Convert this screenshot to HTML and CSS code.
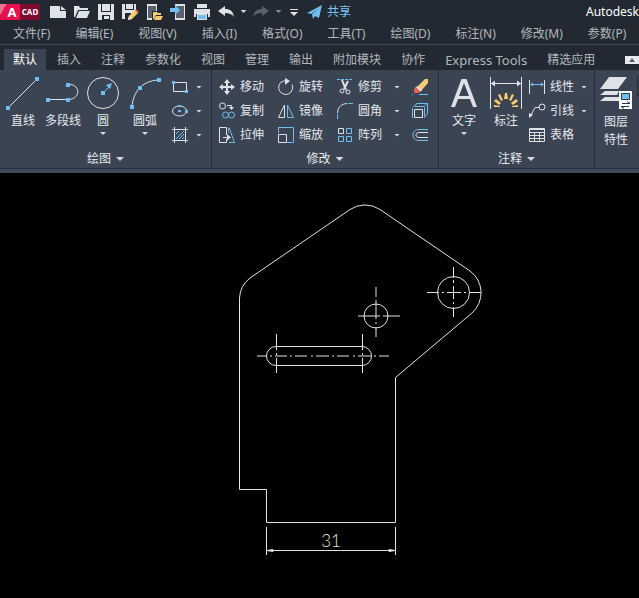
FILE: index.html
```html
<!DOCTYPE html>
<html lang="zh-CN">
<head>
  <meta charset="UTF-8">
  <title>Autodesk AutoCAD</title>
  <link rel="stylesheet" href="styles.css">
</head>
<body>
  <header class="titlebar">
    <button class="logo" aria-label="AutoCAD"><span class="logo-a">A</span><span class="logo-cad">CAD</span></button>
    <div class="quick">
      <button class="quick-btn" aria-label="新建">
        <svg width="18" height="18"><path class="fill" d="M1 3h10v5h6v7H1zM12 3l5 4h-5z"/></svg>
      </button>
      <button class="quick-btn" aria-label="打开">
        <svg width="18" height="18"><path class="fill" d="M1 3h5l1 2h8v2H5L2 14H1zM6 8h11l-3 7H3z"/></svg>
      </button>
      <button class="quick-btn" aria-label="保存">
        <svg width="18" height="18"><path class="fill" d="M1 1h16v16H1z"/><path class="dark" d="M4 1h1v7h8V1h1v8H4zM5 12h8v5H5z"/><path class="fill" d="M7 13h5v3H7z"/></svg>
      </button>
      <button class="quick-btn" aria-label="另存为">
        <svg width="18" height="18"><path class="fill" d="M1 1h14v8l-7 7H1z"/><path class="dark" d="M4 1h1v5h7V1h1v6H4zM4 10h6v2l-3 4H4z"/><path class="gold" d="M8 13l6-6 3 3-6 6-4 1z"/><path class="red" d="M14 7l1-1 3 3-1 1z"/><path class="fill" d="M8 13l3 3-4 1z"/></svg>
      </button>
      <button class="quick-btn" aria-label="从移动设备打开">
        <svg width="18" height="18"><path class="fill" d="M2 1h10v16H2z"/><path class="slate" d="M3 3h8v12H3z"/><path class="dark" d="M7 8h6l4 2v7H7z"/><path class="gold" d="M8 9h4l1 1h3v2h-5l-2 4H8zM11 13h7l-2 4H9z"/></svg>
      </button>
      <button class="quick-btn" aria-label="保存到移动设备">
        <svg width="18" height="18"><path class="fill" d="M6 1h10v16H6z"/><path class="slate" d="M7 3h8v12H7z"/><path class="sky" d="M1 5h5V2l5 5-5 5V9H1z"/></svg>
      </button>
      <button class="quick-btn" aria-label="打印">
        <svg width="18" height="18"><path class="fill" d="M4 1h10v4H4zM1 6h16v8h-2v-3H3v3H1z"/><path class="fill" d="M4 10h10v7H4z"/><path class="sky" d="M5 12h8v4H5z"/></svg>
      </button>
      <button class="quick-btn" aria-label="放弃">
        <svg width="18" height="18"><path class="fill" d="M1 8l7-5v3c5 0 8 2 9 8-2-3-5-4-9-4v3z"/></svg>
      </button>
      <button class="quick-arrow" aria-label="放弃列表"><i class="caret"></i></button>
      <button class="quick-btn" aria-label="重做">
        <svg width="18" height="18"><path class="faded" d="M17 8l-7-5v3c-5 0-8 2-9 8 2-3 5-4 9-4v3z"/></svg>
      </button>
      <button class="quick-arrow" aria-label="重做列表"><i class="caret dim"></i></button>
      <button class="quick-more" aria-label="自定义快速访问工具栏">
        <svg width="10" height="10"><path class="fill" d="M1 2h8v1H1zM1 5h8L5 9z"/></svg>
      </button>
      <button class="share">
        <svg width="18" height="18"><path class="sky" d="M1 10l15-8-3 13-4-2-2 3-1-5 7-6-8 6z"/></svg>
        共享
      </button>
    </div>
    <span class="app-name">Autodesk</span>
  </header>

  <nav class="menubar">
    <a href="#">文件(F)</a>
    <a href="#">编辑(E)</a>
    <a href="#">视图(V)</a>
    <a href="#">插入(I)</a>
    <a href="#">格式(O)</a>
    <a href="#">工具(T)</a>
    <a href="#">绘图(D)</a>
    <a href="#">标注(N)</a>
    <a href="#">修改(M)</a>
    <a href="#">参数(P)</a>
  </nav>

  <div class="tabs">
    <button class="tab active">默认</button>
    <button class="tab">插入</button>
    <button class="tab">注释</button>
    <button class="tab">参数化</button>
    <button class="tab">视图</button>
    <button class="tab">管理</button>
    <button class="tab">输出</button>
    <button class="tab">附加模块</button>
    <button class="tab">协作</button>
    <button class="tab latin">Express Tools</button>
    <button class="tab">精选应用</button>
    <button class="fold" aria-label="最小化功能区">
      <svg width="6" height="4"><path class="slate" d="M0 4l3-4 3 4z"/></svg>
    </button>
  </div>

  <div class="ribbon">
    <!-- 绘图 -->
    <section class="panel">
      <div class="tools draw">
        <button class="big">
          <svg width="34" height="34"><path class="line" d="M2.500 31.500L31 3"/><path class="sky" d="M0 30h4v4H0zM29 1h4v4h-4z"/></svg>
          直线
        </button>
        <button class="big">
          <svg width="34" height="34"><path class="line" d="M2 23.500h20M22 8.500c13-1 13 15 0 15"/><path class="sky" d="M0 22h4v4H0zM20 22h4v4h-4zM20 7h4v4h-4z"/></svg>
          多段线
        </button>
        <button class="big">
          <svg width="34" height="34"><circle class="line" cx="17" cy="17" r="15.500"/><path class="blue-line" d="M17 17l7-7"/><path class="sky" d="M15 15h4v4h-4zM20 9l6-2-2 6z"/></svg>
          圆<i class="caret"></i>
        </button>
        <button class="big">
          <svg width="34" height="34"><path class="line" d="M4 31C5 16 14 5 30 4"/><path class="sky" d="M2 29h4v4H2zM10 10h4v4h-4zM29 2h4v4h-4z"/></svg>
          圆弧<i class="caret"></i>
        </button>
        <div class="list">
          <button class="small" aria-label="矩形">
            <svg width="20" height="20"><path class="line" d="M3.500 5.500h13v9h-13z"/><path class="sky" d="M2 4h3v3H2zM15 13h3v3h-3z"/></svg>
            <i class="caret"></i>
          </button>
          <button class="small" aria-label="椭圆">
            <svg width="20" height="20"><ellipse class="line" cx="9.500" cy="10" rx="7" ry="5"/><path class="sky" d="M8 4h3v2H8zM8 9h3v2H8zM15 9h3v3h-3z"/></svg>
            <i class="caret"></i>
          </button>
          <button class="small" aria-label="图案填充">
            <svg width="20" height="20"><path class="line" d="M2 4.500h16M2 15.500h16M4.500 2v16M15.500 2v16"/><path class="blue-line" d="M6 9l3-3M6 14l8-8M9 14l5-5M12 14l2-2"/></svg>
            <i class="caret"></i>
          </button>
        </div>
      </div>
      <button class="panel-title">绘图<i class="caret wide"></i></button>
    </section>

    <!-- 修改 -->
    <section class="panel">
      <div class="tools modify">
        <div class="list">
          <button class="small">
            <svg width="20" height="20"><path class="thick" d="M10 4v12M4 10h12"/><path class="fill" d="M10 2l3 4H7zM10 18l3-4H7zM2 10l4-3v6zM18 10l-4-3v6z"/></svg>
            移动
          </button>
          <button class="small">
            <svg width="20" height="20"><circle class="line" cx="5.500" cy="5" r="3"/><path class="line" d="M10 4.500h4.500V7"/><path class="fill" d="M12 6h5l-2.500 3z"/><circle class="blue-line" cx="8.500" cy="14" r="3"/><circle class="blue-line" cx="14.500" cy="14" r="3"/></svg>
            复制
          </button>
          <button class="small">
            <svg width="20" height="20"><path class="line" d="M9.500 10V2.500h-7v15h7V14M6 12.500h6"/><path class="fill" d="M10 9l4 3.500-4 3z"/><path class="blue-line" d="M12 2.500l5.500 15H12"/><path class="blue-line" d="M11.500 3v5" stroke-dasharray="3 1"/></svg>
            拉伸
          </button>
        </div>
        <div class="list">
          <button class="small">
            <svg width="20" height="20"><path class="line" d="M6 4.500a7 7 0 1 0 10 3M6 5a7 7 0 0 1 5-1.500"/><path class="fill" d="M9 1l5 3-5 4z"/></svg>
            旋转
          </button>
          <button class="small">
            <svg width="20" height="20"><path class="line" d="M8.500 4v12.500h-6z"/><path class="blue-line" d="M11.500 4v12.500h6z"/></svg>
            镜像
          </button>
          <button class="small">
            <svg width="20" height="20"><path class="blue-line" d="M2 2.500h15.500v15H11M2.500 2v6"/><path class="line" d="M2.500 9.500h8v8h-8z"/></svg>
            缩放
          </button>
        </div>
        <div class="list">
          <button class="small">
            <svg width="20" height="20"><path class="blue-line" d="M2 2.500h15" stroke-dasharray="3 1"/><path class="thick" d="M7 3l4 10M13 4l-4 8"/><circle class="line" cx="7" cy="14" r="2"/><circle class="line" cx="13" cy="15" r="2"/></svg>
            修剪<i class="caret"></i>
          </button>
          <button class="small">
            <svg width="20" height="20"><path class="line" d="M2.500 12C3 6 6 3 12 2.500"/><path class="blue-line" d="M2.500 13v5M13 2.500h5"/></svg>
            圆角<i class="caret"></i>
          </button>
          <button class="small">
            <svg width="20" height="20"><path class="line" d="M3.500 3.500h5v5h-5z"/><path class="blue-line" d="M11.500 3.500h5v5h-5zM3.500 11.500h5v5h-5zM11.500 11.500h5v5h-5z"/></svg>
            阵列<i class="caret"></i>
          </button>
        </div>
        <div class="list">
          <button class="small" aria-label="删除">
            <svg width="20" height="20"><path class="gold" d="M7 10l8-8h3v4l-7 8z"/><path class="fill" d="M5 11l2-2 5 4-2 2z"/><path class="red" d="M4 12l2-2 4 4-2 2H4z"/><path class="blue-line" d="M2 17.500h1M9 17.500h9"/></svg>
          </button>
          <button class="small" aria-label="分解">
            <svg width="20" height="20"><path class="blue-line" d="M3 6l4-3.500h10.500v10L14 17M5 5.500h9l3-3M14.500 6v9M2.500 7v10"/><path class="line" d="M4.500 8.500h8v8h-8z"/></svg>
          </button>
          <button class="small" aria-label="偏移">
            <svg width="20" height="20"><path class="blue-line" d="M18 4.500H9c-8 0-8 11 0 11h9"/><path class="line" d="M18 7.500H9c-4 0-4 5 0 5h9"/></svg>
          </button>
        </div>
      </div>
      <button class="panel-title">修改<i class="caret wide"></i></button>
    </section>

    <!-- 注释 -->
    <section class="panel">
      <div class="tools annotate">
        <button class="big">
          <svg width="34" height="34"><path class="fill" fill-rule="evenodd" d="M4 31L14.500 3h5L30 31h-4l-3-8H11l-3 8zM12 20h10L17 7z"/></svg>
          文字<i class="caret"></i>
        </button>
        <button class="big">
          <svg width="34" height="34"><path class="line" d="M1.500 1v32M32.500 1v32M2 7.500h30"/><path class="fill" d="M2 7.500l4-3v6zM32 7.500l-4-3v6z"/><path class="gold" d="M16 17h2l1 6h-4zM9 19l2-1 3 6-2 1zM25 19l-2-1-3 6 2 1zM5 25l2-2 5 4-2 2zM29 25l-2-2-5 4 2 2zM5 29l6 1v1H5zM29 29l-6 1v1h6z"/></svg>
          标注
        </button>
        <div class="list">
          <button class="small">
            <svg width="20" height="20"><path class="line" d="M2.500 3v14M17.500 3v14"/><path class="blue-line" d="M4 7.500h12"/><path class="sky" d="M3 7.500l3-2v4zM17 7.500l-3-2v4z"/></svg>
            线性<i class="caret"></i>
          </button>
          <button class="small">
            <svg width="20" height="20"><circle class="line" cx="15" cy="6" r="3"/><path class="line" d="M12 6.500H8L4 14"/><path class="fill" d="M2 17v-5l4 2z"/></svg>
            引线<i class="caret"></i>
          </button>
          <button class="small">
            <svg width="20" height="20"><path class="line" d="M2.500 3.500h15v13h-15zM2 4.500h16M2 7.500h16M2 10.500h16M2 13.500h16M7.500 7v10M12.500 7v10"/></svg>
            表格
          </button>
        </div>
      </div>
      <button class="panel-title">注释<i class="caret wide"></i></button>
    </section>

    <!-- 图层 -->
    <section class="panel last">
      <div class="tools layers">
        <button class="big">
          <svg width="34" height="34"><path class="fill" d="M10 1h18l-9 12H1zM6 15h14l-2 4H1zM6 21h14v4H1z"/><path class="white" d="M20 15h13v18H20z"/><path class="sky edge" d="M22.500 17.500h8v6h-8z"/><path class="ink" d="M23 27.500h8M28 25.500l3 2M22 30.500h8M22 30.500l3 2"/></svg>
          图层<br>特性
        </button>
        <select class="layer-select" aria-label="图层"><option>0</option></select>
      </div>
    </section>
  </div>

  <main class="canvas">
    <svg class="drawing" viewBox="0 173 639 425">
      <!-- 外轮廓 -->
      <path d="M239.500 489.500V298A27 27 0 0 1 250 278L350 209.500A27 27 0 0 1 380 209.500L470 271A27 27 0 0 1 472 313L395.500 377.500V522.500H266.500V489.500Z"/>
      <!-- 孔 -->
      <circle cx="453.500" cy="292.500" r="16"/>
      <circle cx="376" cy="316" r="12"/>
      <rect x="266.500" y="346.500" width="105" height="19" rx="9.500"/>
      <!-- 中心线 -->
      <path d="M427 292.500h12M442 292.500h2M447 292.500h14M464 292.500h2M469 292.500h12M453.500 267v11M453.500 280v3M453.500 286v13M453.500 302v2M453.500 307v10"/>
      <path d="M358 316h22M383 316h17M376 287v10M376 300v19M376 322v2M376 327v10"/>
      <path d="M257 356h10M270 356h2M275 356h12M290 356h2M295 356h12M311 356h2M316 356h13M332 356h2M337 356h12M353 356h2M358 356h13M374 356h2M379 356h10"/>
      <path d="M276.500 334v16M276.500 353v2M276.500 358v15M362.500 334v16M362.500 353v2M362.500 358v15"/>
      <!-- 尺寸 -->
      <path d="M266.500 527v28M395.500 527v28M267 550.500h128"/>
      <path class="arrow" d="M267 550.500l6-1v2zM395 550.500l-6-1v2z"/>
      <text x="331" y="547" text-anchor="middle">31</text>
    </svg>
  </main>
</body>
</html>
```
FILE: styles.css
```css
* {
  box-sizing: border-box;
}
body {
  margin: 0;
  min-height: 100vh;
  display: flex;
  flex-direction: column;
  background: #000;
  color: #e6e9ed;
  font-family: "Noto Sans", "Noto Sans CJK SC", sans-serif;
  font-size: 12px;
  line-height: 16px;
  overflow-x: hidden;
}
button {
  background: none;
  border: none;
  padding: 0;
  margin: 0;
  color: inherit;
  font: inherit;
  white-space: nowrap;
  cursor: pointer;
}
svg {
  display: block;
  flex: none;
}

/* title bar */
.titlebar {
  display: flex;
  align-items: center;
  justify-content: space-between;
  height: 23px;
  background: #222933;
  overflow: hidden;
}
.logo {
  display: flex;
  align-items: center;
  flex: none;
  height: 16px;
  margin-right: 6px;
  color: #fff;
  font-weight: bold;
}
.logo-a {
  width: 20px;
  padding-left: 4px;
  background: linear-gradient(120deg, #f0708c 22%, #e5124f 22%);
  font-size: 13px;
}
.logo-cad {
  width: 20px;
  background: #7d0b30;
  font-size: 8px;
}
.quick {
  display: flex;
  align-items: center;
  flex: 1;
}
.quick-btn {
  display: flex;
  justify-content: center;
  width: 24px;
}
.quick-arrow {
  display: flex;
  justify-content: center;
  width: 11px;
}
.quick-more {
  display: flex;
  justify-content: center;
  width: 20px;
}
.share {
  display: flex;
  align-items: center;
  gap: 3px;
  padding-left: 2px;
  color: #7cc4f5;
}
.app-name {
  width: 53px;
  color: #fff;
  white-space: nowrap;
}

/* menu bar */
.menubar {
  display: flex;
  align-items: center;
  gap: 25px;
  height: 22px;
  padding: 1px 0 0 13px;
  background: #222933;
  border-bottom: 1px solid #414853;
  overflow: hidden;
}
.menubar a {
  color: #b4b8be;
  text-decoration: none;
  white-space: nowrap;
}

/* tabs */
.tabs {
  display: flex;
  align-items: center;
  height: 25px;
  padding: 4px 0 0 3px;
  background: #222933;
  overflow: hidden;
}
.tab {
  height: 21px;
  margin: 0 1px;
  padding: 0 9px;
  color: #b4b8be;
}
.tab.active {
  background: #3b4453;
  color: #fff;
}
.tab.latin {
  font-size: 13px;
}
.fold {
  display: flex;
  align-items: center;
  justify-content: center;
  width: 14px;
  height: 8px;
  margin-left: auto;
  background: #e6e9ed;
}

/* ribbon */
.ribbon {
  display: flex;
  height: 103px;
  background: #3b4453;
  border-bottom: 4px solid #414a59;
  overflow: hidden;
}
.panel {
  display: flex;
  flex-direction: column;
  flex: none;
  border-right: 1px solid #222d3d;
  border-bottom: 1px solid #222d3d;
}
.panel.last {
  flex: 1;
  border-right: none;
}
.panel-title {
  display: flex;
  align-items: center;
  justify-content: center;
  gap: 5px;
  height: 18px;
}
.tools {
  display: grid;
  height: 80px;
  padding: 6px 5px 0;
}
.draw {
  grid-template-columns: 36px 44px 36px 48px 37px;
}
.modify {
  grid-template-columns: 59px 59px 75px 23px;
}
.annotate {
  grid-template-columns: 42px 42px 63px;
  padding: 6px 4px 0;
}
.layers {
  grid-template-columns: 34px 1fr;
  gap: 4px;
  padding: 6px 0 0 4px;
}
.big {
  display: flex;
  flex-direction: column;
  align-items: center;
  align-self: start;
}
.big svg {
  margin-bottom: 3px;
}
.big .caret {
  margin-top: 3px;
}
.layers .big {
  line-height: 18px;
}
.list {
  display: flex;
  flex-direction: column;
  gap: 4px;
  padding-top: 1px;
}
.small {
  display: flex;
  align-items: center;
  gap: 3px;
  height: 20px;
}
.draw .list {
  padding-left: 1px;
}
.modify .caret {
  margin-left: 9px;
}
.annotate .caret {
  margin-left: 4px;
}
.annotate .big .caret {
  margin-left: 0;
}
.draw .small .caret {
  margin-left: 3px;
}
.caret {
  flex: none;
  width: 6px;
  height: 3px;
  background: #d5d9de;
  clip-path: polygon(0 0, 100% 0, 50% 100%);
}
.caret.wide {
  width: 8px;
  height: 4px;
}
.caret.dim {
  background: #858b94;
}
.layer-select {
  width: 120px;
  height: 20px;
  background: #3b4453;
  border: 1px solid #222d3d;
  color: #e6e9ed;
}

/* icon colours */
.fill { fill: #dfe3e7; }
.white { fill: #fff; }
.dark { fill: #222933; }
.slate { fill: #59616d; }
.faded { fill: #59616d; }
.sky { fill: #70bff2; }
.gold { fill: #f8cc70; }
.red { fill: #ec5a50; }
.edge { stroke: #2f3947; }
.ink { fill: none; stroke: #2f3947; }
.line { fill: none; stroke: #dfe3e7; }
.thick { fill: none; stroke: #dfe3e7; stroke-width: 2px; }
.blue-line { fill: none; stroke: #70bff2; }

/* drawing area */
.canvas {
  flex: 1;
  background: #000;
}
.drawing {
  width: 100%;
  height: auto;
  fill: none;
  stroke: #e2e2e2;
}
.drawing .arrow {
  fill: #e2e2e2;
}
.drawing text {
  fill: #e2e2e2;
  stroke: none;
  font-family: Lato, sans-serif;
  font-weight: 300;
  font-size: 17px;
}
```
